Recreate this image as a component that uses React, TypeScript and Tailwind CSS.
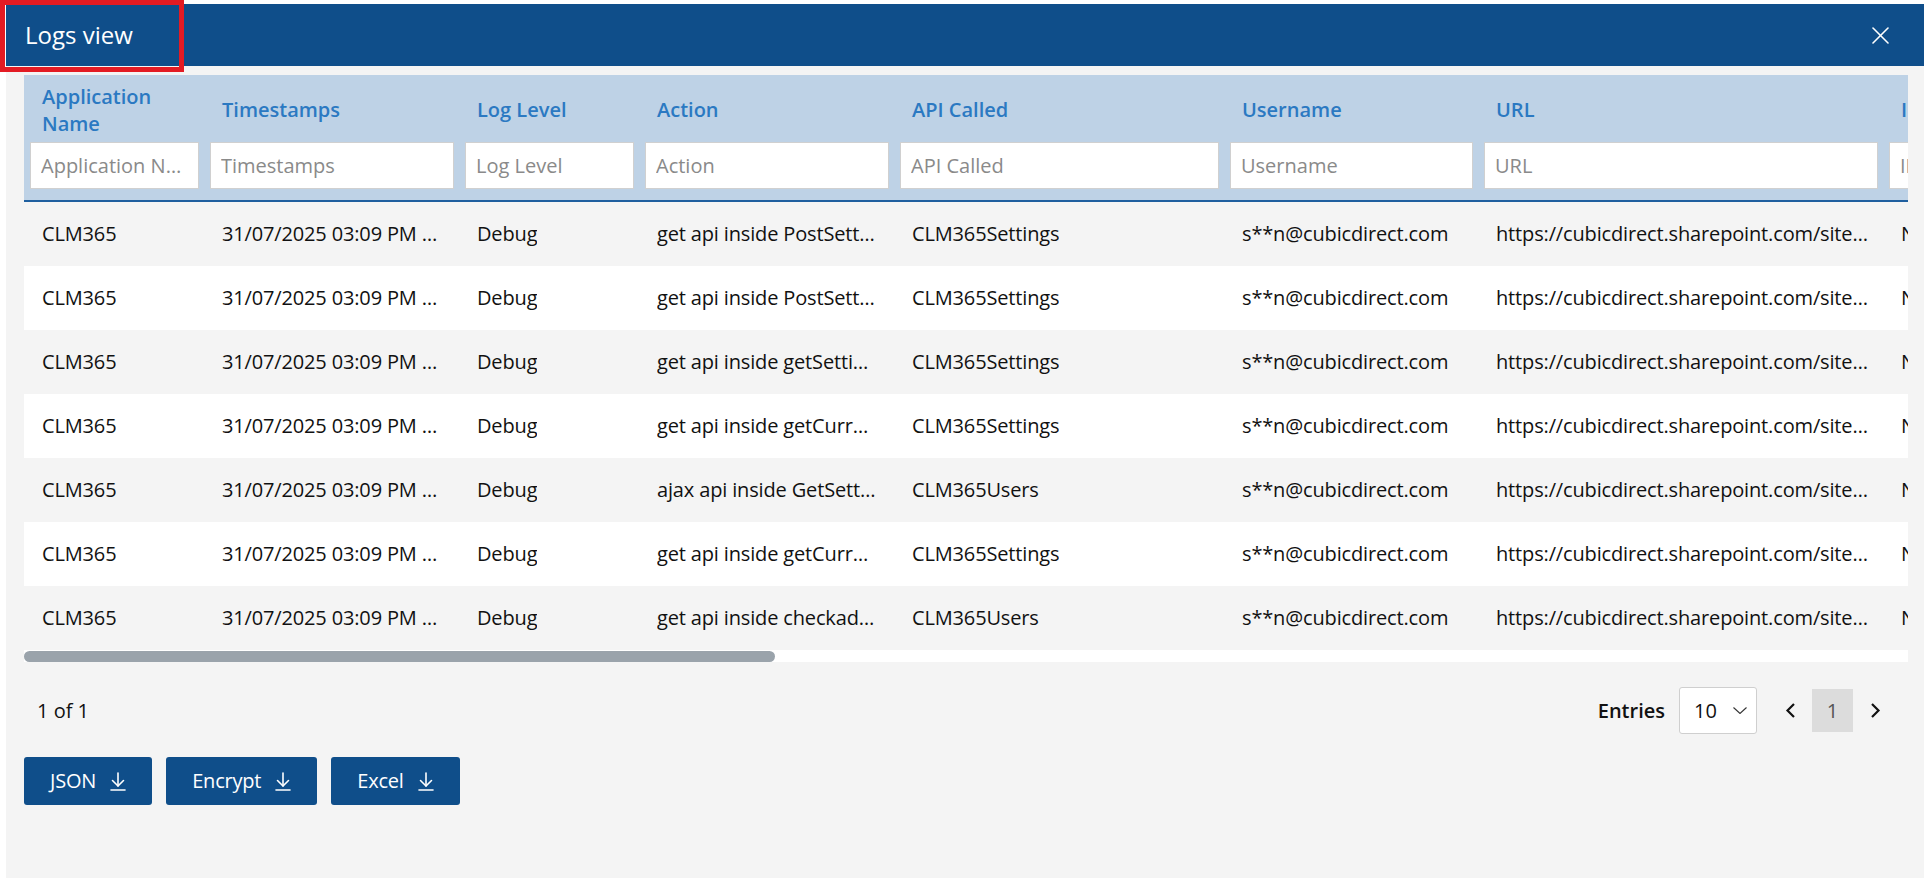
import React from "react";

const cols = [
  { key: "app", label: ["Application", "Name"], ph: "Application Name" },
  { key: "ts", label: ["Timestamps"], ph: "Timestamps" },
  { key: "lvl", label: ["Log Level"], ph: "Log Level" },
  { key: "act", label: ["Action"], ph: "Action" },
  { key: "api", label: ["API Called"], ph: "API Called" },
  { key: "user", label: ["Username"], ph: "Username" },
  { key: "url", label: ["URL"], ph: "URL" },
  { key: "ip", label: ["IP Address"], ph: "IP Address" },
];

const rows = [
  ["get api inside PostSettings", "CLM365Settings"],
  ["get api inside PostSettings", "CLM365Settings"],
  ["get api inside getSettings", "CLM365Settings"],
  ["get api inside getCurrentUser", "CLM365Settings"],
  ["ajax api inside GetSettings", "CLM365Users"],
  ["get api inside getCurrentUser", "CLM365Settings"],
  ["get api inside checkadmin", "CLM365Users"],
];

const gridCols =
  "grid grid-cols-[180px_255px_180px_255px_330px_254px_405px_220px] w-max";

const font = { fontFamily: "'Segoe UI', 'Open Sans', 'Noto Sans', sans-serif" };

function DownloadIcon() {
  return (
    <svg width="16" height="19" viewBox="0 0 16 19" fill="none" stroke="white" strokeWidth="1.6" strokeLinecap="round" strokeLinejoin="round">
      <path d="M8 1 V14" />
      <path d="M2.5 8.5 L8 14 L13.5 8.5" />
      <path d="M1 18 H15" />
    </svg>
  );
}

function Btn({ label }: { label: string }) {
  return (
    <button className="h-[48px] px-[26px] rounded-[3px] bg-[#0f4e8a] text-white text-[20px] tracking-[-0.2px] flex items-center gap-[14px]">
      <span className="leading-none">{label}</span>
      <DownloadIcon />
    </button>
  );
}

export default function App() {
  return (
    <div className="relative w-[1924px] h-[878px] bg-white overflow-hidden" style={font}>
      <div className="absolute left-[6px] top-[4px] right-0 bottom-0 bg-[#f4f4f4] flex flex-col">
        {/* header */}
        <div className="h-[62px] bg-[#0f4e8a] flex items-center justify-between pl-[19px] pr-[35px] shrink-0">
          <span className="text-white text-[24px] leading-none">Logs view</span>
          <svg width="17" height="17" viewBox="0 0 17 17" stroke="white" strokeWidth="1.6" strokeLinecap="round">
            <path d="M1 1 L16 16" />
            <path d="M16 1 L1 16" />
          </svg>
        </div>

        <div className="pl-[18px] pr-[16px] pt-[9px] flex flex-col">
          {/* table */}
          <div className="w-full overflow-hidden">
            <div className={`${gridCols} bg-[#bed2e6] border-b-2 border-[#1f5f9f]`}>
              {cols.map((c) => (
                <div key={c.key} className="flex flex-col pl-[6px] pr-[5px] pb-[11px]">
                  <div className="h-[67px] pt-[2px] flex items-center pl-[12px] text-[20px] font-semibold leading-[27px] text-[#2b79c2]">
                    <div className="whitespace-nowrap">
                      {c.label.map((l, i) => (
                        <div key={i}>{l}</div>
                      ))}
                    </div>
                  </div>
                  <input
                    readOnly
                    placeholder={c.ph}
                    className="h-[47px] w-full bg-white border border-[#d0d0d0] px-[10px] text-[20px] truncate placeholder:text-[#8a8a8a] outline-none"
                  />
                </div>
              ))}
            </div>
            {rows.map((r, i) => {
              const cells = [
                "CLM365",
                "31/07/2025 03:09 PM +05:30",
                "Debug",
                r[0],
                r[1],
                "s**n@cubicdirect.com",
                "https://cubicdirect.sharepoint.com/sites/CLM365",
                "NA",
              ];
              return (
                <div
                  key={i}
                  className={`${gridCols} h-[64px] ${i % 2 === 0 ? "bg-[#f4f4f4]" : "bg-white"}`}
                >
                  {cells.map((t, j) => (
                    <div key={j} className="flex items-center pl-[18px] pr-[15px] min-w-0">
                      <span className="truncate text-[20px] tracking-[-0.15px] text-[#111]">{t}</span>
                    </div>
                  ))}
                </div>
              );
            })}
            {/* scrollbar */}
            <div className="h-[12px] bg-white flex items-center">
              <div className="w-[751px] h-[11px] rounded-full bg-[#9aa3ab]" />
            </div>
          </div>

          {/* footer */}
          <div className="mt-[25px] h-[47px] flex items-center justify-between">
            <span className="pl-[13px] text-[20px] text-[#111]">1 of 1</span>
            <div className="flex items-center pr-[27px]">
              <span className="text-[20px] font-semibold text-[#111] mr-[14px]">Entries</span>
              <div className="w-[78px] h-[47px] bg-white border border-[#cfcfcf] rounded-[3px] flex items-center pl-[14px] gap-[16px]">
                <span className="text-[20px] text-[#111]">10</span>
                <svg width="14" height="7" viewBox="0 0 14 7" fill="none" stroke="#333" strokeWidth="1.1">
                  <path d="M0.5 0.5 L7 6.5 L13.5 0.5" />
                </svg>
              </div>
              <svg className="ml-[28px]" width="11" height="15" viewBox="0 0 11 15" fill="none" stroke="#111" strokeWidth="2.2">
                <path d="M9 1 L2.5 7.5 L9 14" />
              </svg>
              <div className="ml-[16px] w-[41px] h-[43px] bg-[#dcdcdc] flex items-center justify-center text-[20px] text-[#555]">
                1
              </div>
              <svg className="ml-[17px]" width="11" height="15" viewBox="0 0 11 15" fill="none" stroke="#111" strokeWidth="2.2">
                <path d="M2 1 L8.5 7.5 L2 14" />
              </svg>
            </div>
          </div>

          {/* buttons */}
          <div className="mt-[23px] flex gap-[14px]">
            <Btn label="JSON" />
            <Btn label="Encrypt" />
            <Btn label="Excel" />
          </div>
        </div>
      </div>

      {/* annotation box */}
      <div className="absolute left-0 top-0 w-[184px] h-[72px] border-[5px] border-[#e31b23] pointer-events-none" />
    </div>
  );
}
